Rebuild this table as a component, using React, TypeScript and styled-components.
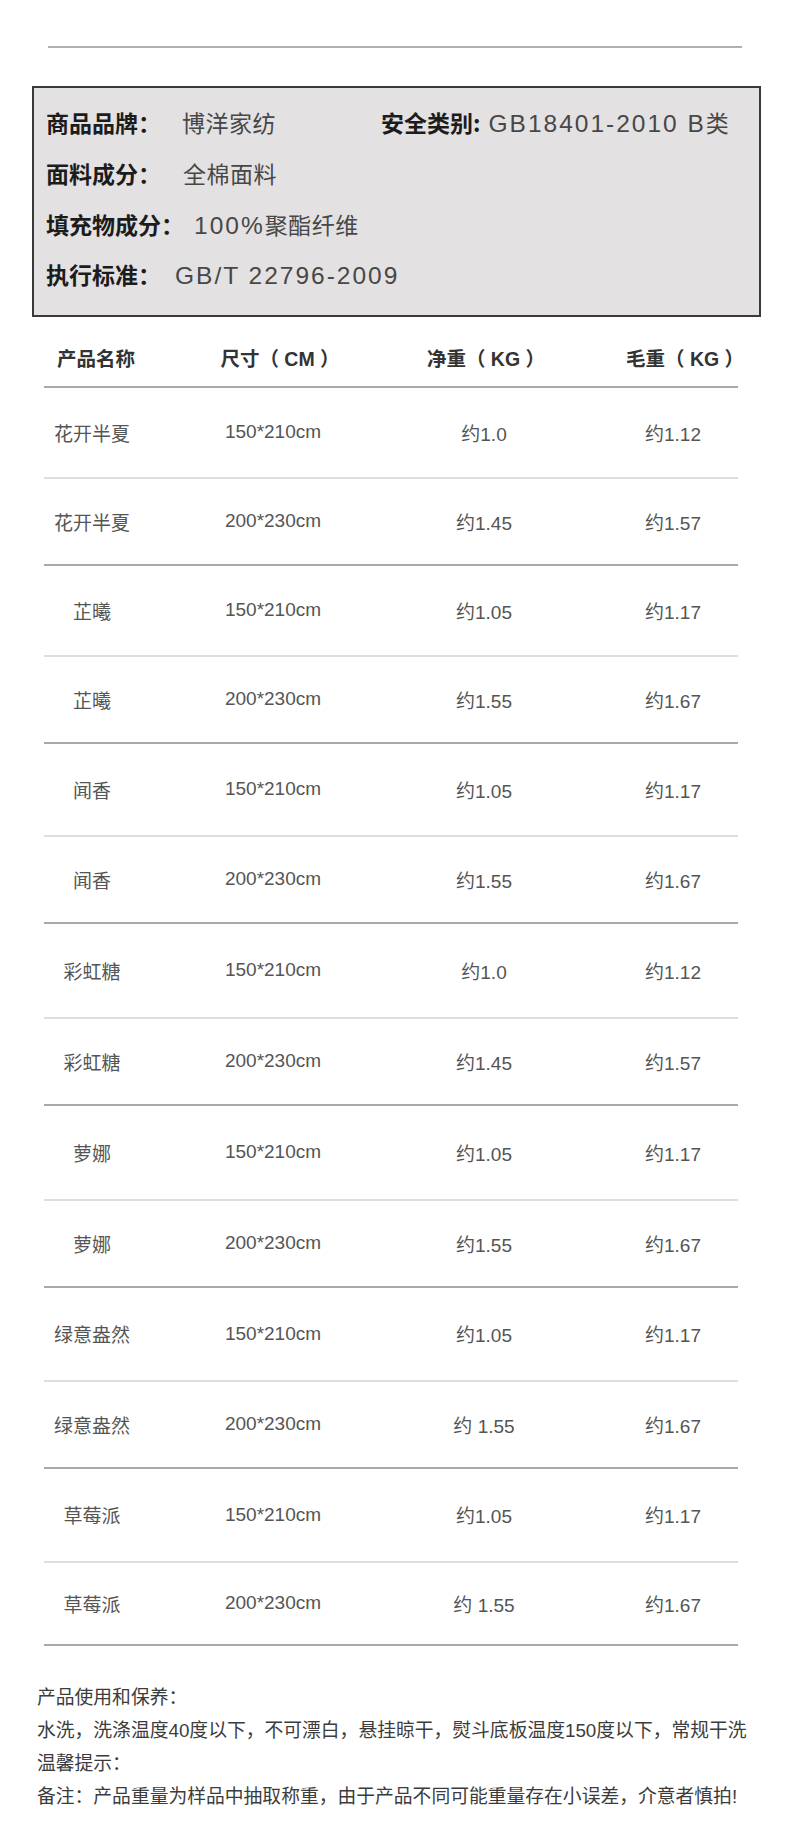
import styled, { createGlobalStyle } from "styled-components";

const GlobalStyle = createGlobalStyle`
  body {
    margin: 0;
    background: #ffffff;
    font-family: "Liberation Sans", "Noto Sans CJK SC", sans-serif;
  }
`;

const Page = styled.div`
  width: 790px;
  min-height: 1847px;
  padding-top: 46px;
  box-sizing: border-box;
  background: #ffffff;
`;

const TopRule = styled.div`
  height: 2px;
  margin: 0 48px;
  background: #b0b0b0;
`;

const SpecBox = styled.section`
  margin: 38px 29px 0 32px;
  padding: 9px 12px 15px;
  border: 2px solid #3a3a3a;
  background: #e4e1e2;
`;

const SpecRow = styled.div`
  display: grid;
  grid-template-columns: 335px 1fr;
  align-items: center;
  height: 50.67px;
`;

const Pair = styled.div`
  display: flex;
  align-items: baseline;
  white-space: nowrap;
`;

const Label = styled.span`
  font-family: "Noto Sans CJK SC", sans-serif;
  font-weight: 700;
  font-size: 23px;
  color: #1c1c1c;
`;

const Value = styled.span<{ $gap: number }>`
  margin-left: ${(p) => p.$gap}px;
  font-family: "Liberation Sans", "Noto Sans CJK SC", sans-serif;
  font-size: 23px;
  letter-spacing: 0.5px;
  color: #474747;
`;

const Latin = styled.span`
  font-size: 24.5px;
  letter-spacing: 2px;
`;

const Table = styled.div`
  margin: 18px 52px 0 44px;
`;

const HeadRow = styled.div`
  display: grid;
  grid-template-columns: 96px 266px 156px 176px;
  align-items: center;
  height: 53px;
  padding-bottom: 6px;
  box-sizing: border-box;
  border-bottom: 2px solid #a9a9a9;
`;

const HeadCell = styled.div`
  text-align: center;
  font-family: "Liberation Sans", "Noto Sans CJK SC", sans-serif;
  font-weight: 700;
  font-size: 19.5px;
  color: #333333;
  white-space: pre;
  &:nth-child(1) {
    padding-left: 8px;
  }
  &:nth-child(2) {
    padding-left: 14px;
  }
  &:nth-child(3) {
    padding-left: 4px;
  }
  &:nth-child(4) {
    padding-left: 64px;
  }
`;

const Row = styled.div<{ $strong: boolean; $h: number }>`
  display: grid;
  grid-template-columns: 96px 266px 156px 176px;
  align-items: center;
  height: ${(p) => p.$h}px;
  box-sizing: border-box;
  border-bottom: 2px solid ${(p) => (p.$strong ? "#a9a9a9" : "#dedede")};
`;

const Cell = styled.div`
  text-align: center;
  font-size: 19px;
  color: #555555;
  white-space: nowrap;
  &:nth-child(4) {
    padding-left: 46px;
  }
`;

const Notes = styled.div`
  padding: 35px 37px 0;
`;

const Note = styled.p`
  margin: 0;
  font-size: 18.8px;
  line-height: 33px;
  color: #3c3c3c;
  white-space: nowrap;
`;

const specs = [
  { label: "商品品牌：", value: <>博洋家纺</>, gap: 21 },
  { label: "面料成分：", value: <>全棉面料</>, gap: 22 },
  {
    label: "填充物成分：",
    value: (
      <>
        <Latin>100%</Latin>聚酯纤维
      </>
    ),
    gap: 10,
  },
  {
    label: "执行标准：",
    value: <Latin>GB/T 22796-2009</Latin>,
    gap: 14,
  },
];

const rows = [
  { h: 91, cells: ["花开半夏", "150*210cm", "约1.0", "约1.12"] },
  { h: 87, cells: ["花开半夏", "200*230cm", "约1.45", "约1.57"] },
  { h: 91, cells: ["芷曦", "150*210cm", "约1.05", "约1.17"] },
  { h: 87, cells: ["芷曦", "200*230cm", "约1.55", "约1.67"] },
  { h: 93, cells: ["闻香", "150*210cm", "约1.05", "约1.17"] },
  { h: 87, cells: ["闻香", "200*230cm", "约1.55", "约1.67"] },
  { h: 95, cells: ["彩虹糖", "150*210cm", "约1.0", "约1.12"] },
  { h: 87, cells: ["彩虹糖", "200*230cm", "约1.45", "约1.57"] },
  { h: 95, cells: ["萝娜", "150*210cm", "约1.05", "约1.17"] },
  { h: 87, cells: ["萝娜", "200*230cm", "约1.55", "约1.67"] },
  { h: 94, cells: ["绿意盎然", "150*210cm", "约1.05", "约1.17"] },
  { h: 87, cells: ["绿意盎然", "200*230cm", "约 1.55", "约1.67"] },
  { h: 94, cells: ["草莓派", "150*210cm", "约1.05", "约1.17"] },
  { h: 83, cells: ["草莓派", "200*230cm", "约 1.55", "约1.67"] },
];

function App() {
  return (
    <Page>
      <GlobalStyle />
      <TopRule />
      <SpecBox>
        {specs.map((s, i) => (
          <SpecRow key={s.label}>
            <Pair>
              <Label>{s.label}</Label>
              <Value $gap={s.gap}>{s.value}</Value>
            </Pair>
            {i === 0 && (
              <Pair>
                <Label>安全类别:</Label>
                <Value $gap={8}>
                  <Latin>GB18401-2010 B</Latin>类
                </Value>
              </Pair>
            )}
          </SpecRow>
        ))}
      </SpecBox>
      <Table>
        <HeadRow>
          <HeadCell>产品名称</HeadCell>
          <HeadCell>尺寸（ CM ）</HeadCell>
          <HeadCell>净重（ KG ）</HeadCell>
          <HeadCell>毛重（ KG ）</HeadCell>
        </HeadRow>
        {rows.map((r, i) => (
          <Row key={i} $strong={i % 2 === 1} $h={r.h}>
            {r.cells.map((c, j) => (
              <Cell key={j}>{c}</Cell>
            ))}
          </Row>
        ))}
      </Table>
      <Notes>
        <Note>产品使用和保养：</Note>
        <Note>
          水洗，洗涤温度40度以下，不可漂白，悬挂晾干，熨斗底板温度150度以下，常规干洗
        </Note>
        <Note>温馨提示：</Note>
        <Note>
          备注：产品重量为样品中抽取称重，由于产品不同可能重量存在小误差，介意者慎拍!
        </Note>
      </Notes>
    </Page>
  );
}

export default App;
